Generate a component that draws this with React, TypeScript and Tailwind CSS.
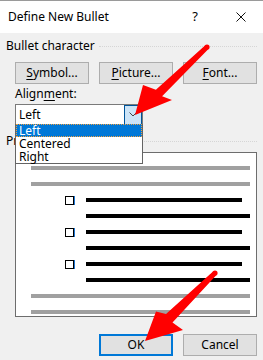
import React from "react";

const font = { fontFamily: '"Noto Sans", "Open Sans", sans-serif' };

const Btn = ({ children, primary }: { children: React.ReactNode; primary?: boolean }) => (
  <div
    className={`flex h-[22px] w-[74px] items-center justify-center bg-[#e1e1e1] text-[12px] text-black ${
      primary ? "border-2 border-[#0078d7]" : "border border-[#adadad]"
    }`}
  >
    {children}
  </div>
);

const Bar = ({ gray, indent }: { gray?: boolean; indent?: boolean }) => (
  <div className={`flex h-[16px] items-center ${indent ? "pl-[70px]" : "pl-[15px]"}`}>
    <div className={`h-[4px] ${gray ? "bg-[#a0a0a0]" : "bg-black"} ${indent ? "w-[164px]" : "w-[219px]"}`} />
  </div>
);

const BulletRow = () => (
  <div className="flex h-[16px] items-center pl-[49px]">
    <div className="h-[9px] w-[9px] border-[1.5px] border-black shadow-[1px_0_0_#1e78d7]" />
    <div className="ml-[12px] h-[4px] w-[156px] bg-black" />
  </div>
);

export default function App() {
  return (
    <div className="relative h-[360px] w-[263px] overflow-hidden bg-[#f0f0f0] text-black" style={font}>
      {/* title bar */}
      <div className="flex h-[33px] items-center border-t border-[#9a9a9a] bg-white pl-[8px] text-[12px]">
        <span className="flex-1">Define New Bullet</span>
        <span className="mr-[38px] text-[13px]">?</span>
        <svg width="10" height="10" viewBox="0 0 10 10" className="mr-[17px]">
          <path d="M0.5 0.5 L9.5 9.5 M9.5 0.5 L0.5 9.5" stroke="#111" strokeWidth="1" />
        </svg>
      </div>

      <div className="px-[6px] pt-[4px] text-[12px]">
        <div className="flex items-center">
          <span>Bullet character</span>
          <div className="ml-[4px] flex-1 border-t border-dotted border-[#d6d6d6]" />
        </div>
        <div className="mt-[7px] flex justify-between pl-[9px]">
          <Btn>
            <u className="underline-offset-2">S</u>ymbol...
          </Btn>
          <Btn>
            <u className="underline-offset-2">P</u>icture...
          </Btn>
          <Btn>
            <u className="underline-offset-2">F</u>ont...
          </Btn>
        </div>

        <div className="mt-[2px] pl-[9px] leading-[16px]">
          Align<u className="underline-offset-2">m</u>ent:
        </div>
        <div className="relative ml-[9px] mt-[2px] w-[128px]">
          <div className="flex h-[21px] items-center border border-[#7a7a7a] bg-white pl-[3px]">
            <span className="flex-1">Left</span>
            <div className="flex h-[20px] w-[18px] items-center justify-center border border-[#005499] bg-[#cce4f7]">
              <svg width="8" height="5" viewBox="0 0 8 5">
                <path d="M0.5 0.5 L4 4 L7.5 0.5" fill="none" stroke="#444" strokeWidth="1" />
              </svg>
            </div>
          </div>
          <div className="absolute left-0 top-[20px] z-10 w-[128px] border border-t-0 border-[#646464] bg-white">
            <div className="h-[13px] border border-dotted border-[#f0a040] bg-[#0078d7] pl-[2px] leading-[11px] text-white">
              Left
            </div>
            <div className="h-[13px] pl-[3px] leading-[13px]">Centered</div>
            <div className="h-[13px] pl-[3px] leading-[13px]">Right</div>
          </div>
        </div>

        <div className="mt-[7px] flex items-center">
          <span>Preview</span>
          <div className="ml-[4px] flex-1 border-t border-dotted border-[#d6d6d6]" />
        </div>
        <div className="ml-[9px] mt-[2px] h-[165px] w-[242px] border border-[#6d6d6d] bg-white pt-[7px]">
          <Bar gray />
          <Bar gray />
          <BulletRow />
          <Bar indent />
          <BulletRow />
          <Bar indent />
          <BulletRow />
          <Bar indent />
          <Bar gray />
          <Bar gray />
        </div>

        <div className="mt-[17px] flex justify-end gap-[10px]">
          <Btn primary>OK</Btn>
          <Btn>Cancel</Btn>
        </div>
      </div>

      {/* red arrows */}
      <svg className="pointer-events-none absolute left-0 top-0 z-20" width="263" height="360" viewBox="0 0 263 360">
        <g fill="#ff0000">
          <circle cx="207" cy="47" r="2.6" />
          <polygon points="205.3,45.2 155.9,89.7 143,85 135,115 172,100 162.1,96.3 208.7,48.8" />
          <circle cx="215" cy="273" r="2.6" />
          <polygon points="213.3,271.2 166,314 156,311.5 145,341 183,330 172.5,322.5 216.7,274.8" />
        </g>
      </svg>
    </div>
  );
}
